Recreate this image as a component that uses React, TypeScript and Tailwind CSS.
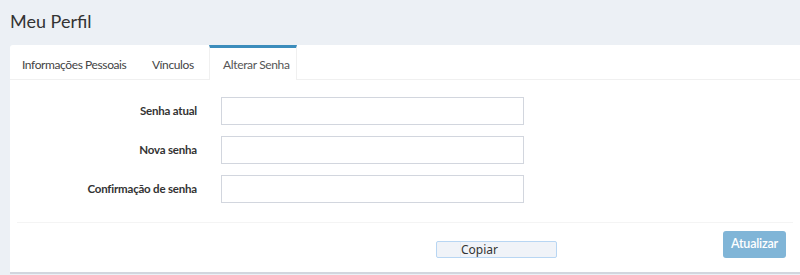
const font = { fontFamily: '"Source Sans Pro", Lato, "Noto Sans", sans-serif' };

const fields = ["Senha atual", "Nova senha", "Confirmação de senha"];

export default function App() {
  return (
    <div className="w-[800px] h-[275px] bg-[#ecf0f5] overflow-hidden text-[#333]" style={font}>
      <div className="h-[45px] pl-[10px] pt-[9px] text-[18px] leading-[24px] text-[#333]">Meu Perfil</div>

      <div className="ml-[10px] h-[229px] bg-white border-b-2 border-[#d2d6de] rounded-tl-[3px] flex flex-col">
        <div className="flex h-[35px] border-b border-[#f0f0f0] text-[12px] text-[#444] whitespace-nowrap">
          <div className="shrink-0 w-[127px] pl-[12px] pt-[11px] tracking-[-0.4px]">Informações Pessoais</div>
          <div className="shrink-0 w-[72px] pl-[15px] pt-[11px] tracking-[-0.35px]">Vínculos</div>
          <div className="shrink-0 w-[88px] -mb-px bg-white border-t-[3px] border-[#3c8dbc] border-x border-x-[#f0f0f0] pl-[13px] pt-[8px] text-[#555] tracking-[-0.35px]">
            Alterar Senha
          </div>
        </div>

        <div className="flex flex-col gap-[11px] pt-[17px]">
          {fields.map((f) => (
            <div key={f} className="flex items-center">
              <label className="w-[187px] text-right text-[11.5px] font-bold text-[#333] tracking-[-0.2px] whitespace-nowrap">{f}</label>
              <input
                type="password"
                className="ml-[24px] w-[303px] h-[28px] border border-[#d2d6de] bg-white outline-none"
              />
            </div>
          ))}
        </div>

        <div className="mx-[7px] mt-[19px] border-t border-[#f4f4f4]" />

        <div className="flex items-start pt-[8px]">
          <button className="ml-[426px] mt-[10px] w-[121px] h-[17px] flex items-center border border-[#b8d6f3] rounded-[2px] bg-[#f0f3f8] text-[12px] text-[#333]" style={{ fontFamily: '"Noto Sans", "Open Sans", sans-serif' }}>
            <span className="w-[24px] h-full border-r border-[#e6ebf2]" />
            <span className="leading-none">Copiar</span>
          </button>
          <button className="ml-[166px] w-[63px] h-[27px] rounded-[3px] bg-[#80b5d7] text-white text-[12.5px] font-semibold tracking-[-0.2px]">
            Atualizar
          </button>
        </div>
      </div>
    </div>
  );
}
